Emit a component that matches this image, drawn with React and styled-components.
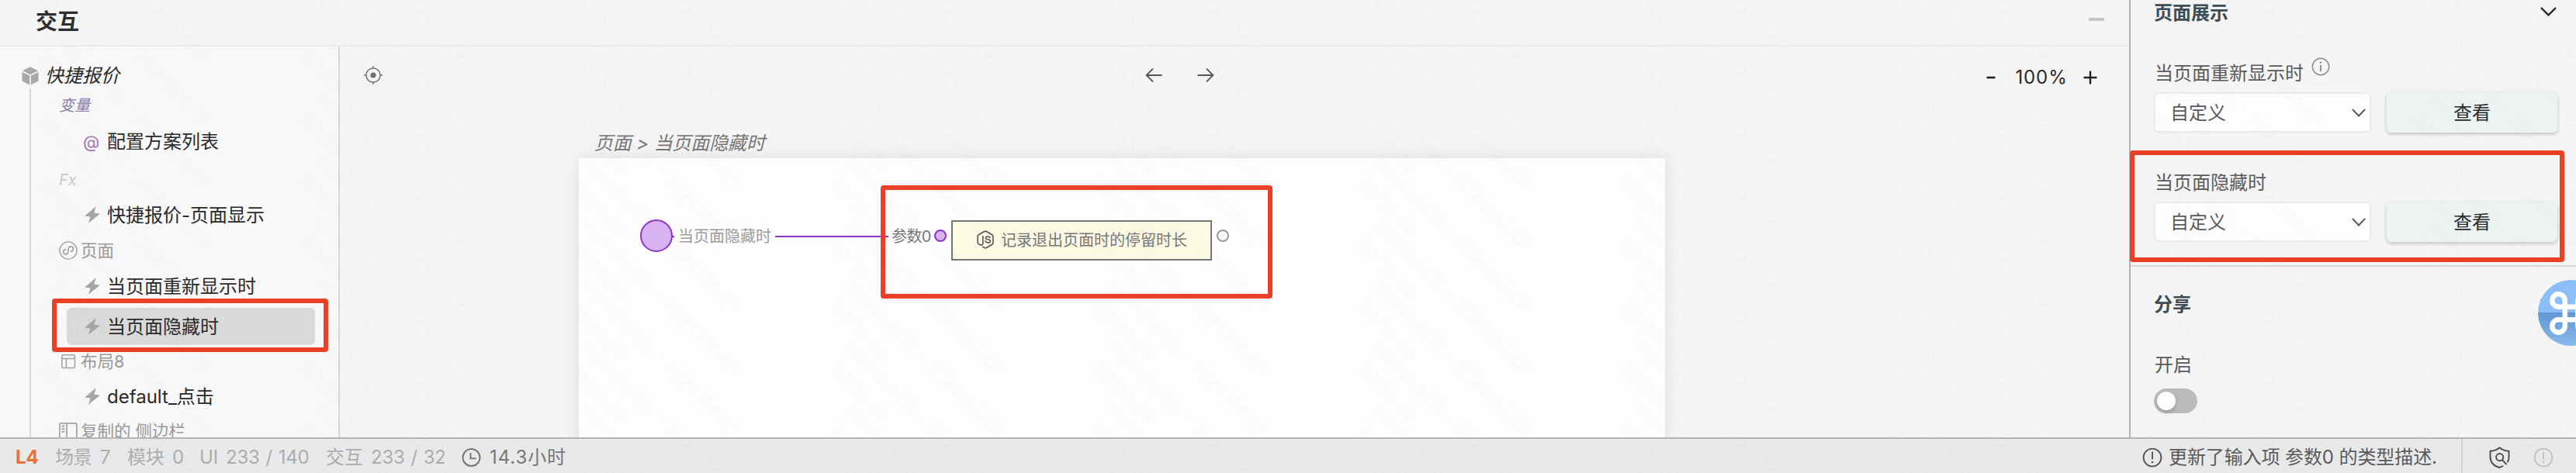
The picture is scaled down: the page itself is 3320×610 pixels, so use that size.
import React from "react";
import styled, { createGlobalStyle, css } from "styled-components";

const GlobalStyle = createGlobalStyle`
  * { box-sizing: border-box; }
  body {
    margin: 0;
    background: #f5f5f5;
    font-family: Inter, "Noto Sans CJK SC", sans-serif;
    font-size: 24px;
    line-height: 28px;
    color: #2a2a2a;
    white-space: nowrap;
  }
  svg { display: block; flex: none; }
`;

/* ---------- shell ---------- */

const Screen = styled.div`
  position: relative;
  width: 3320px;
  height: 610px;
  overflow: hidden;
  display: grid;
  grid-template: 564px 46px / 2746px 574px;
`;

const Main = styled.main`
  display: flex;
  flex-direction: column;
  border-right: 2px solid #b3b3b3;
  min-height: 0;
`;

const Header = styled.header`
  height: 60px;
  flex: none;
  display: flex;
  align-items: center;
  justify-content: space-between;
  padding: 0 32px 2px 46px;
  border-bottom: 2px solid #ebebeb;
`;

const Title = styled.h1`
  margin: 0;
  font-size: 28px;
  line-height: 32px;
  font-weight: 600;
  color: #2f2f2f;
`;

const Minimize = styled.span`
  width: 20px;
  height: 4px;
  margin-top: -6px;
  background: #c5c5c5;
`;

const Body = styled.div`
  flex: 1;
  display: flex;
  min-height: 0;
`;

const RedFrame = styled.div`
  position: absolute;
  left: ${(p) => p.$x}px;
  top: ${(p) => p.$y}px;
  width: ${(p) => p.$w}px;
  height: ${(p) => p.$h}px;
  border: 6px solid #ec4026;
  border-radius: 4px;
  pointer-events: none;
`;

/* ---------- tree ---------- */

const Sidebar = styled.aside`
  width: 438px;
  flex: none;
  border-right: 2px solid #d8d8d8;
  background: #f8f8f8;
  padding-top: 24px;
  overflow: hidden;
`;

const RootRow = styled.div`
  height: 28px;
  display: flex;
  align-items: center;
  gap: 8px;
  padding-left: 28px;
  font-style: italic;
`;

const Branch = styled.div`
  margin: 2px 0 0 38px;
  padding-top: 10px;
  border-left: 2px solid #d9d9d9;
  height: 452px;
`;

const Section = styled.div`
  height: 24px;
  margin-top: ${(p) => p.$gap || 0}px;
  padding-left: 36px;
  display: flex;
  align-items: center;
  gap: 4px;
  font-size: 21.5px;
  color: #999;
  svg { color: #a3a3a3; }
  ${(p) =>
    p.$caption &&
    css`
      font-size: 20px;
      font-style: italic;
      color: ${p.$caption};
    `}
`;

const Item = styled.div`
  height: 48px;
  width: 320px;
  margin: ${(p) => p.$gap || 0}px 0 0 46px;
  padding: ${(p) => (p.$selected ? 2 : 0)}px 0 0 23px;
  display: flex;
  align-items: center;
  gap: 9px;
  border-radius: 6px;
  background: ${(p) => (p.$selected ? "#dadada" : "transparent")};
  svg { margin-top: -2px; }
`;

const AtSign = styled.span`
  width: 20px;
  margin: -1px 0 0 -2px;
  font-size: 22px;
  color: #9f76b3;
  & + span { margin-left: 2px; }
`;

const Cube = () => (
  <svg width="22" height="24" viewBox="0 0 22 24" fill="#a8a8a8">
    <path d="M11 0.3 21 5.3 11 10.2 1 5.3z" />
    <path d="M0.5 6.9 10.2 11.6V23.6L0.5 18.6zM21.5 6.9 11.8 11.6V23.6L21.5 18.6z" />
  </svg>
);

const Bolt = () => (
  <svg width="20" height="22" viewBox="0 0 20 22" fill="#a5a5a5">
    <path d="M14.6 0.3 0.2 12.6 7.4 13.6 5 21.7 19.9 9.7 12.3 8.6z" />
  </svg>
);

const MiniProgram = () => (
  <svg width="24" height="24" viewBox="0 0 24 24" fill="none" stroke="currentColor" strokeWidth="1.4">
    <circle cx="12" cy="12" r="11.1" />
    <path
      d="M8.4 11.3a3 3 0 1 0 3.6 3V9.2a3.1 3.1 0 1 1 3.6 3.4"
      strokeWidth="1.7"
      strokeLinecap="round"
      transform="rotate(8 12 12)"
    />
  </svg>
);

const LayoutIcon = () => (
  <svg width="24" height="20" viewBox="0 0 24 20" fill="none" stroke="currentColor" strokeWidth="1.5">
    <rect x="3.8" y="1.8" width="16.6" height="16.6" rx="2" />
    <path d="M3.8 6.6h16.6M9.4 6.6v11.8" />
  </svg>
);

const SideIcon = () => (
  <svg width="24" height="24" viewBox="0 0 24 24" fill="none" stroke="currentColor" strokeWidth="1.7">
    <rect x="0.9" y="1.9" width="22" height="20" rx="1.5" />
    <path d="M10 1.9v20" />
    <path d="M3.4 5.6h4M3.4 9.2h4M3.4 12.8h4" strokeWidth="2" />
  </svg>
);

/* ---------- canvas ---------- */

const Canvas = styled.section`
  position: relative;
  flex: 1;
  overflow: hidden;
`;

const Toolbar = styled.div`
  height: 74px;
  display: grid;
  grid-template-columns: 1007px 1fr auto;
  align-items: center;
  padding: 0 41px 0 31px;
`;

const History = styled.div`
  display: flex;
  gap: 45px;
`;

const ZoomControl = styled.div`
  display: flex;
  align-items: center;
  justify-content: space-between;
  width: 143px;
  padding-top: 5px;
  letter-spacing: 0.9px;
`;

const ZoomValue = styled.span`
  margin-left: 5px;
`;

const Crumb = styled.div`
  padding: 37px 0 0 328px;
  height: 70px;
  font-style: italic;
  color: #777;
  letter-spacing: -0.15px;
`;

const Sheet = styled.div`
  position: relative;
  width: 1400px;
  height: 400px;
  margin-left: 308px;
  background: #fdfdfd;
  box-shadow: 0 0 20px rgba(0, 0, 0, 0.1);
`;

const Placed = styled.div`
  position: absolute;
  left: ${(p) => p.$x}px;
  top: ${(p) => p.$y}px;
`;

const Port = styled(Placed)`
  width: ${(p) => p.$size}px;
  height: ${(p) => p.$size}px;
  border-radius: 50%;
  border: 2px solid ${(p) => (p.$empty ? "#9b9b9b" : "#8c35c9")};
  background: ${(p) => (p.$empty ? "#fdfdfd" : "#d9b3f1")};
`;

const Wire = styled(Placed)`
  width: ${(p) => p.$w}px;
  height: 2px;
  background: #8c35c9;
`;

const PortLabel = styled(Placed)`
  font-size: 20px;
  line-height: 24px;
  color: ${(p) => (p.$dark ? "#777" : "#9c9c9c")};
  letter-spacing: ${(p) => (p.$dark ? "-0.6px" : "0")};
`;

const CodeNode = styled(Placed)`
  width: 336px;
  height: 52px;
  display: flex;
  align-items: center;
  gap: 9px;
  padding-left: 31px;
  border: 2px solid #777;
  background: #fdfae3;
  font-size: 20px;
  color: #777;
  svg { margin-top: -2px; }
`;

const Target = () => (
  <svg width="24" height="24" viewBox="0 0 24 24" fill="none" stroke="#707070" strokeWidth="1.5">
    <circle cx="12" cy="12" r="9.1" />
    <circle cx="12" cy="12" r="3.6" fill="#707070" stroke="none" />
    <path d="M12 0v3M12 21v3M0 12h3M21 12h3" />
  </svg>
);

const Arrow = ({ back }) => (
  <svg width="22" height="20" viewBox="0 0 22 20" fill="none" stroke="#555" strokeWidth="1.9">
    <path d={back ? "M21.5 10H1.5M10 1.6 1.6 10l8.4 8.4" : "M.5 10h20M12 1.6l8.4 8.4-8.4 8.4"} />
  </svg>
);

const Minus = () => (
  <svg width="12" height="18" viewBox="0 0 12 18" stroke="#222" strokeWidth="2.6">
    <path d="M.5 9h11" />
  </svg>
);

const Plus = () => (
  <svg width="18" height="18" viewBox="0 0 18 18" stroke="#222" strokeWidth="2.4">
    <path d="M.5 9h17M9 .5v17" />
  </svg>
);

const NodeJs = () => (
  <svg width="22" height="24" viewBox="0 0 22 24" fill="none" stroke="#555" strokeWidth="1.6" strokeLinejoin="round" strokeLinecap="round">
    <path d="M7.8 7.5v8.8c0 1.7-.7 2.7-2.2 2.7-.8 0-1.5-.4-2.5-.9-1.4-.7-2-1.1-2-2.3V7.8c0-1 .4-1.5 1.2-2L9.7 1.5c.9-.5 1.7-.5 2.6 0l7.4 4.3c.8.5 1.2 1 1.2 2v8.4c0 1-.4 1.5-1.2 2l-7.4 4.3c-.9.5-1.7.5-2.6 0L7.8 21.3" />
    <path d="M17 9.6c-.3-1.1-1.3-1.6-2.8-1.6-1.7 0-2.8.6-2.8 1.9 0 2.9 6 .9 6 4 0 1.4-1.3 2-3.1 2-1.9 0-3.1-.7-3.3-2.2" />
  </svg>
);

/* ---------- properties ---------- */

const Panel = styled.aside`
  display: flex;
  flex-direction: column;
  min-height: 0;
  overflow: hidden;
`;

const Group = styled.div`
  padding: ${(p) => p.$top || 0}px 24px 0 30px;
  height: ${(p) => p.$h}px;
  flex: none;
  border-bottom: ${(p) => (p.$line ? "2px solid #d8d8d8" : "0")};
`;

const GroupTitle = styled.div`
  display: flex;
  align-items: center;
  justify-content: space-between;
  padding-right: 1px;
  height: 28px;
  color: #3f4d55;
  font-weight: 600;
  svg { margin-top: -4px; }
`;

const Field = styled.div`
  display: flex;
  flex-direction: column;
  margin-top: ${(p) => p.$gap}px;
`;

const Label = styled.div`
  display: flex;
  height: 28px;
  gap: 10px;
  padding-left: 1px;
  color: #5a5a5a;
  svg { margin-top: -7px; }
`;

const Controls = styled.div`
  display: flex;
  gap: 20px;
  margin-top: 10px;
`;

const Select = styled.div`
  width: 280px;
  height: 52px;
  display: flex;
  align-items: center;
  justify-content: space-between;
  padding: 1px 5px 0 19px;
  border: 2px solid #ebebeb;
  border-radius: 6px;
  background: #fdfdfd;
  color: #5a5a5a;
`;

const Button = styled.button`
  width: 220px;
  height: 52px;
  padding: 1px 0 0;
  border: 0;
  border-radius: 6px;
  background: #edf3f0;
  box-shadow: 0 2px 5px rgba(0, 0, 0, 0.22);
  font: inherit;
  color: #2a2a2a;
`;

const Switch = styled.div`
  width: 56px;
  height: 32px;
  margin-top: 16px;
  padding: 4px;
  border-radius: 16px;
  background: #bcbcbc;
  &::before {
    content: "";
    display: block;
    width: 24px;
    height: 24px;
    border-radius: 50%;
    background: #fdfdfd;
    box-shadow: 0 3px 6px rgba(0, 35, 11, 0.2);
  }
`;

const Badge = styled.div`
  position: absolute;
  left: 3271px;
  top: 361px;
  width: 85px;
  height: 85px;
  display: flex;
  align-items: center;
  justify-content: center;
  border-radius: 50%;
  background: linear-gradient(#8cbef8 0 50%, #6197d5 50%, #89b8ec 100%);
`;

const Chevron = ({ w = 21, h = 12, color = "#2a2a2a", sw = 2.4 }) => (
  <svg width={w} height={h} viewBox="0 0 20 12" preserveAspectRatio="none" fill="none" stroke={color} strokeWidth={sw}>
    <path d="M.9 1 10 10.4 19.1 1" />
  </svg>
);

const InfoIcon = () => (
  <svg width="24" height="24" viewBox="0 0 24 24" fill="none" stroke="#8a8a8a" strokeWidth="1.5">
    <circle cx="12" cy="12" r="10.7" />
    <path d="M12 10v8" strokeWidth="1.9" />
    <circle cx="12" cy="6.6" r="1.2" fill="#8a8a8a" stroke="none" />
  </svg>
);

const AlertIcon = ({ color = "#555", sw = 1.9 }) => (
  <svg width="26" height="26" viewBox="0 0 26 26" fill="none" stroke={color} strokeWidth={sw}>
    <circle cx="13" cy="13" r="11.4" />
    <path d="M13 5.5v9.8" />
    <circle cx="13" cy="19" r="1.3" fill={color} stroke="none" />
  </svg>
);

const CommandIcon = () => (
  <svg width="66" height="66" viewBox="0 0 24 24" fill="none" stroke="#fff" strokeWidth="2.3">
    <path d="M15 6v12a3 3 0 1 0 3-3H6a3 3 0 1 0 3 3V6a3 3 0 1 0-3 3h12a3 3 0 1 0-3-3" />
  </svg>
);

/* ---------- status bar ---------- */

const StatusBar = styled.footer`
  grid-column: 1 / 3;
  display: flex;
  justify-content: space-between;
  border-top: 2px solid #b5b5b5;
  background: #e8e9eb;
`;

const Stats = styled.div`
  display: grid;
  grid-template-columns: 51px 58px 35px 58px 35px 34px 129px 58px 95px 22px auto;
  align-items: center;
  padding: 4px 0 0 20px;
  color: #adadad;
  letter-spacing: -0.2px;
  word-spacing: 1.2px;
`;

const Level = styled.span`
  font-weight: 700;
  letter-spacing: 0;
  color: #ea722c;
`;

const Edge = styled.i`
  width: 2px;
  height: 34px;
  background: #ecedef;
`;

const Elapsed = styled.span`
  display: flex;
  align-items: center;
  gap: 11px;
  color: #777;
  letter-spacing: 0.9px;
`;

const Messages = styled.div`
  display: flex;
  width: 559px;
`;

const Message = styled.div`
  width: 413px;
  display: flex;
  align-items: center;
  gap: 8px;
  padding-top: 4px;
  border-right: 2px solid #d3d4d6;
  color: #5a5a5a;
  letter-spacing: -0.1px;
`;

const Indicators = styled.div`
  display: flex;
  align-items: center;
  gap: 30px;
  padding: 4px 0 0 34px;
`;

const Clock = () => (
  <svg width="25" height="24" viewBox="0 0 25 24" fill="none" stroke="#777" strokeWidth="2">
    <circle cx="12.5" cy="12" r="11" />
    <path d="M11.5 6v7.3h7" />
  </svg>
);

const ShieldSearch = () => (
  <svg width="27" height="28" viewBox="0 0 27 28" fill="none" stroke="#4d4d4d" strokeWidth="1.9" strokeLinecap="round" strokeLinejoin="round">
    <path d="M24 19.6c1-2 1.5-4.3 1.5-6.6V5.8C20.6 5.4 16.6 3.9 13.5 1.2 10.4 3.9 6.4 5.4 1.5 5.8V13c0 6.8 4.6 12 12 14l4-1.8" />
    <circle cx="13.7" cy="13.6" r="4.6" />
    <path d="M17 17.2l5 5.3" />
  </svg>
);

/* ---------- watermark ---------- */

const WatermarkLayer = styled.svg`
  position: absolute;
  inset: 0;
  pointer-events: none;
`;

const Watermark = () => (
  <WatermarkLayer width="3320" height="610" aria-hidden="true">
    <defs>
      <pattern id="wm" width="340" height="80" patternUnits="userSpaceOnUse">
        <g fontSize="23.5" fill="#000" fillOpacity="0.011">
          {[-160, -80, 0, 80].map((dy) => (
            <g key={dy} transform={`translate(68 ${50 + dy}) rotate(45)`}>
              <text>moyukai05 - 2024/04/01</text>
              <text x="4" y="34">20:30:58</text>
            </g>
          ))}
        </g>
      </pattern>
    </defs>
    <rect width="3320" height="610" fill="url(#wm)" />
  </WatermarkLayer>
);

/* ---------- page ---------- */

const Event = ({ children, gap, selected }) => (
  <Item $gap={gap} $selected={selected}>
    <Bolt />
    <span>{children}</span>
  </Item>
);

const EventField = ({ label, info, gap }) => (
  <Field $gap={gap}>
    <Label>
      {label}
      {info && <InfoIcon />}
    </Label>
    <Controls>
      <Select>
        自定义
        <Chevron w={18} h={11} color="#555" sw={2.2} />
      </Select>
      <Button>查看</Button>
    </Controls>
  </Field>
);

export default function App() {
  return (
    <Screen>
      <GlobalStyle />
      <Main>
        <Header>
          <Title>交互</Title>
          <Minimize />
        </Header>
        <Body>
          <Sidebar>
            <RootRow>
              <Cube />
              快捷报价
            </RootRow>
            <Branch>
              <Section $caption="#8b80ab">变量</Section>
              <Item $gap={11}>
                <AtSign>@</AtSign>
                <span>配置方案列表</span>
              </Item>
              <Section $gap={13} $caption="#c9c9c9">Fx</Section>
              <Event gap={10}>快捷报价-页面显示</Event>
              <Section $gap={9}>
                <MiniProgram />
                页面
              </Section>
              <Event gap={11}>当页面重新显示时</Event>
              <Event gap={3} selected>当页面隐藏时</Event>
              <Section $gap={9}>
                <LayoutIcon />
                布局8
              </Section>
              <Event gap={10}>default_点击</Event>
              <Section $gap={8}>
                <SideIcon />
                复制的 侧边栏
              </Section>
            </Branch>
          </Sidebar>
          <Canvas>
            <Toolbar>
              <Target />
              <History>
                <Arrow back />
                <Arrow />
              </History>
              <ZoomControl>
                <Minus />
                <ZoomValue>100%</ZoomValue>
                <Plus />
              </ZoomControl>
            </Toolbar>
            <Crumb>页面 &gt; 当页面隐藏时</Crumb>
            <Sheet>
              <Wire $x={120} $y={100} $w={3} />
              <Port $x={79} $y={79} $size={42} />
              <PortLabel $x={128} $y={89}>当页面隐藏时</PortLabel>
              <Wire $x={253} $y={100} $w={146} />
              <PortLabel $x={403} $y={89} $dark>参数0</PortLabel>
              <Port $x={458} $y={92} $size={16} />
              <CodeNode $x={480} $y={80}>
                <NodeJs />
                记录退出页面时的停留时长
              </CodeNode>
              <Port $x={822} $y={92} $size={16} $empty />
            </Sheet>
          </Canvas>
        </Body>
      </Main>
      <Panel>
        <Group $h={344} $top={3} $line>
          <GroupTitle>
            页面展示
            <Chevron />
          </GroupTitle>
          <EventField label="当页面重新显示时" info gap={50} />
          <EventField label="当页面隐藏时" gap={51} />
        </Group>
        <Group $h={220} $top={35}>
          <GroupTitle>
            分享
            <Chevron />
          </GroupTitle>
          <Field $gap={50}>
            <Label>开启</Label>
            <Switch />
          </Field>
        </Group>
      </Panel>
      <StatusBar>
        <Stats>
          <Level>L4</Level>
          <span>场景</span>
          <span>7</span>
          <span>模块</span>
          <span>0</span>
          <span>UI</span>
          <span>233 / 140</span>
          <span>交互</span>
          <span>233 / 32</span>
          <Edge />
          <Elapsed>
            <Clock />
            14.3小时
          </Elapsed>
        </Stats>
        <Messages>
          <Message>
            <AlertIcon />
            更新了输入项 参数0 的类型描述.
          </Message>
          <Indicators>
            <ShieldSearch />
            <AlertIcon color="#bfbfbf" sw={1.7} />
          </Indicators>
        </Messages>
      </StatusBar>
      <Badge>
        <CommandIcon />
      </Badge>
      <Watermark />
      <RedFrame $x={67} $y={385} $w={356} $h={69} />
      <RedFrame $x={1135} $y={239} $w={505} $h={146} />
      <RedFrame $x={2745} $y={194} $w={560} $h={144} />
    </Screen>
  );
}
